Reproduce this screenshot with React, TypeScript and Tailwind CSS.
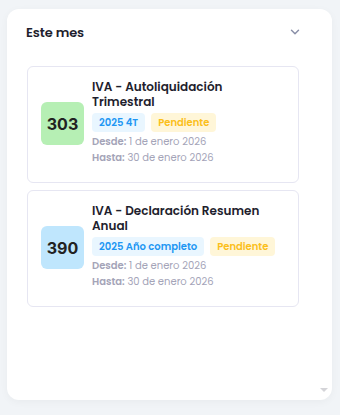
import { ChevronDown } from "lucide-react";

const items = [
  {
    code: "303",
    title: "IVA - Autoliquidación Trimestral",
    period: "2025 4T",
    status: "Pendiente",
    from: "1 de enero 2026",
    to: "30 de enero 2026",
    color: "bg-[#b6efb4]",
  },
  {
    code: "390",
    title: "IVA - Declaración Resumen Anual",
    period: "2025 Año completo",
    status: "Pendiente",
    from: "1 de enero 2026",
    to: "30 de enero 2026",
    color: "bg-[#bfe6fd]",
  },
];

export default function App() {
  return (
    <div className="w-[340px] h-[415px] bg-[#f1f4f7] pt-[9px] pl-[7px] font-['Poppins','Inter',sans-serif]">
      <div className="relative w-[325px] h-[391px] bg-white rounded-xl shadow-[0_2px_8px_rgba(0,0,0,0.04)]">
        <div className="flex items-center justify-between pl-[19px] pr-[30px] h-[48px]">
          <span className="text-[13px] font-semibold text-[#1e1e2d] tracking-[-0.1px]">Este mes</span>
          <ChevronDown size={14} strokeWidth={2.5} className="text-[#8a8fa8] -mt-[3px]" />
        </div>
        <div className="flex flex-col gap-[7px] pl-[20px] pt-[9px]">
          {items.map((it) => (
            <div
              key={it.code}
              className="w-[272px] h-[117px] border border-[#e6e6f2] rounded-md flex items-center gap-[8px] pl-[13px] pb-[4px]"
            >
              <div
                className={`${it.color} w-[43px] h-[43px] rounded-md flex items-center justify-center shrink-0 mt-[2px]`}
              >
                <span className="text-[16px] font-bold text-[#222] font-['Inter',sans-serif]">{it.code}</span>
              </div>
              <div className="flex flex-col">
                <div className="text-[12px] font-semibold leading-[15px] text-[#1e1e2d] pr-4">{it.title}</div>
                <div className="flex gap-[6px] mt-[4px]">
                  <span className="px-[7px] h-[19px] flex items-center rounded bg-[#e9f6ff] text-[#2196f3] text-[10px] font-semibold">
                    {it.period}
                  </span>
                  <span className="px-[7px] h-[19px] flex items-center rounded bg-[#fff6d8] text-[#fbbf1a] text-[10px] font-semibold">
                    {it.status}
                  </span>
                </div>
                <div className="text-[10px] text-[#a4a4b8] mt-[2px] leading-[16px]">
                  <span className="font-semibold">Desde:</span> {it.from}
                </div>
                <div className="text-[10px] text-[#a4a4b8] leading-[16px]">
                  <span className="font-semibold">Hasta:</span> {it.to}
                </div>
              </div>
            </div>
          ))}
        </div>
        <div className="absolute right-[4px] bottom-[8px] w-0 h-0 border-l-[4px] border-r-[4px] border-t-[4px] border-l-transparent border-r-transparent border-t-[#d4d4d8]" />
      </div>
    </div>
  );
}
